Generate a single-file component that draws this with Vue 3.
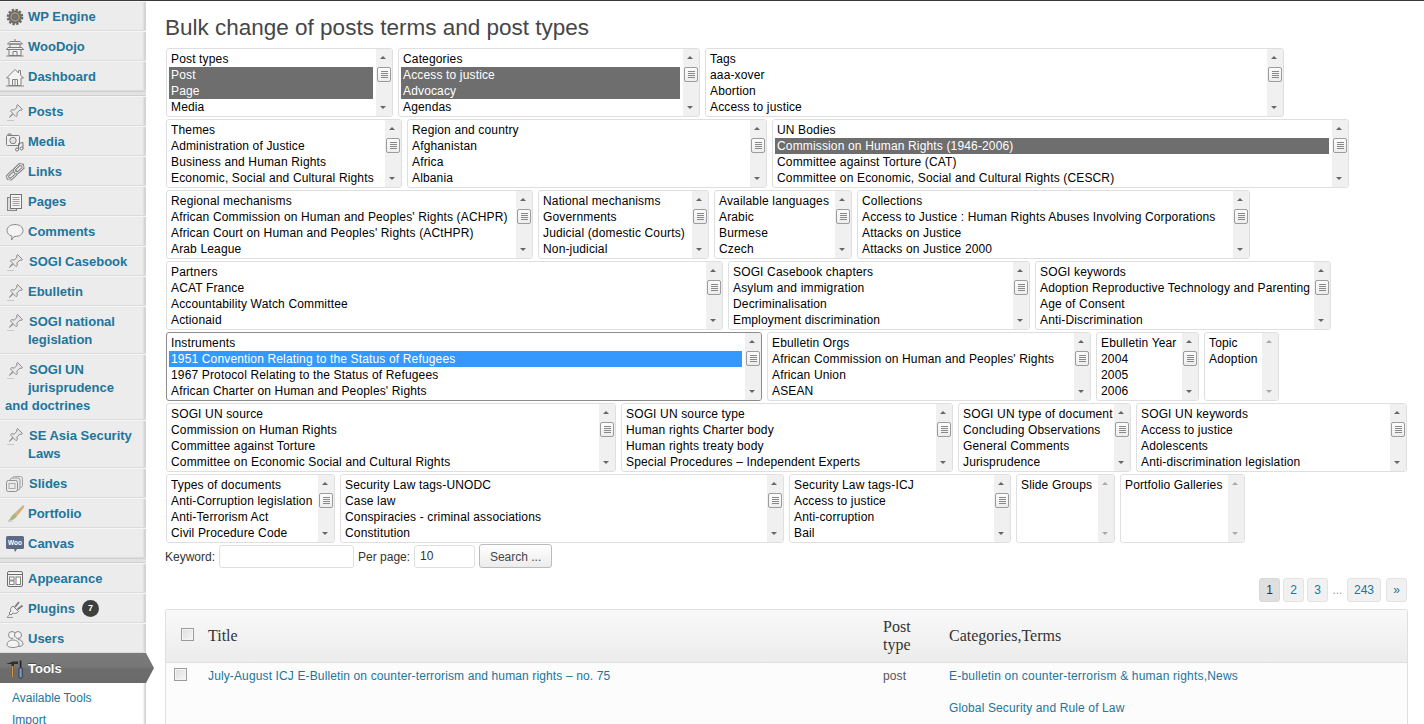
<script setup>
const pin = `<path d="M12.5 2.5l5 5-1.5 1-1-.6-3 3 .3 2.6-1.3 1.2-2.6-2.7-3.9 3.4 3.2-4.2L5.4 8.9l1.3-1.2 2.6.4 2.8-3-.5-1.1z" fill="#e9e9e9" stroke="#8b8b8b" stroke-width="1"/><path d="M2 18.5h7" stroke="#c8c8c8" stroke-width="1"/>`
const icons = {
  gear: `<circle cx="10" cy="10" r="6.6" fill="#6c6c6c"/><circle cx="10" cy="10" r="7.2" fill="none" stroke="#6c6c6c" stroke-width="2.2" stroke-dasharray="2.4 1.4"/><circle cx="10" cy="10" r="4" fill="none" stroke="#a59c6c" stroke-width="1.4"/><circle cx="10" cy="10" r="2.2" fill="#777"/>`,
  dojo: `<path d="M5 4.5h10l2.5 2.5h-15zM10 2v2.5M3 10.5h14l1.5 2h-17zM5 7h10v3.5H5z" fill="#efefef" stroke="#7d7d7d" stroke-width="1"/><path d="M4 12.500v6h12v-6z" fill="#f2f2f2" stroke="#7d7d7d" stroke-width="1"/><path d="M8 18.500v-4h4v4M1.500 19h17" fill="none" stroke="#7d7d7d" stroke-width="1"/>`,
  home: `<path d="M10 2.500L1.500 11h2.500v7.500h12V11h2.500l-3-3V3.500h-2v2.500z" fill="#f4f4f4" stroke="#858585" stroke-width="1" stroke-linejoin="round"/><path d="M7.500 18.500V12.500h5v6M10 12.500v6M1 19h18" fill="none" stroke="#858585" stroke-width="1"/>`,
  pin,
  media: `<rect x="1.500" y="3.500" width="13" height="10" rx="1" fill="#f0f0f0" stroke="#7f7f7f"/><circle cx="8" cy="8.500" r="3.200" fill="#e3e3e3" stroke="#7f7f7f"/><path d="M3 3.500v-1.500h3v1.500" fill="none" stroke="#7f7f7f"/><path d="M13.500 17.500V11.500l4.500-1v6" fill="none" stroke="#777" stroke-width="1"/><circle cx="12" cy="17.500" r="1.500" fill="#eee" stroke="#777"/><circle cx="16.500" cy="16.500" r="1.500" fill="#eee" stroke="#777"/>`,
  link: `<g fill="none" stroke-linecap="round"><path d="M3 16.500l-.5-2.500 5-5 3 .5.500 3-5 4.500z" stroke="#858585" stroke-width="3"/><path d="M3 16.500l-.5-2.500 5-5 3 .5.500 3-5 4.500z" stroke="#eeeeee" stroke-width="1"/><path d="M10 10l-.5-2.500 5-5 3 .5.500 3-5 4.500z" stroke="#858585" stroke-width="3"/><path d="M10 10l-.5-2.500 5-5 3 .5.500 3-5 4.500z" stroke="#eeeeee" stroke-width="1"/></g>`,
  pages: `<rect x="2.500" y="5.500" width="9" height="13" fill="#dcdcdc" stroke="#858585"/><rect x="5.500" y="2.500" width="11" height="14" fill="#f4f4f4" stroke="#747474"/><path d="M7.500 5.500h7M7.500 7.500h7M7.500 9.500h7M7.500 11.500h7M7.500 13.500h7" stroke="#a0a0a0"/>`,
  comment: `<path d="M10 2.500c4.500 0 8 2.500 8 6s-3.500 6-8 6l-1 .2-2.500 3.300.5-3.800c-3-.7-5-3-5-5.700 0-3.500 3.500-6 8-6z" fill="#f4f4f4" stroke="#8a8a8a"/>`,
  slides: `<rect x="7.500" y="2.500" width="10" height="11" rx="2" fill="#e6e6e6" stroke="#a8a8a8"/><rect x="5" y="4" width="10" height="12" rx="2" fill="#e6e6e6" stroke="#a0a0a0"/><rect x="1.500" y="6.500" width="11" height="11" rx="2" fill="#ececec" stroke="#909090"/><rect x="4" y="9.500" width="6" height="5" fill="none" stroke="#aaa"/>`,
  brush: `<path d="M18 1.500L9.500 10l2 2L19 3z" fill="#d8b476" stroke="#c2995a" stroke-width=".6"/><path d="M9.500 9.500l2.500 2.500c-1.500 3-5 4.500-9 5 2.500-1.500 3-5.500 6.500-7.500z" fill="#a9b77c"/><path d="M3 17.500h5" stroke="#cfcfcf"/>`,
  woo: `<path d="M2.500 2h15a1.500 1.500 0 0 1 1.500 1.500v10a1.500 1.500 0 0 1-1.500 1.500H12l-2 3-1-3H2.500A1.500 1.500 0 0 1 1 13.500v-10A1.500 1.500 0 0 1 2.500 2z" fill="#5d6a86"/><text x="10" y="11" font-size="6.500" font-family="Liberation Sans, sans-serif" font-weight="700" fill="#fff" text-anchor="middle">Woo</text>`,
  appearance: `<rect x="2.500" y="2.500" width="15" height="15" rx="1.500" fill="#f3f3f3" stroke="#6f6f6f"/><path d="M2.500 5.500h15" stroke="#6f6f6f"/><rect x="4.500" y="8" width="4.500" height="3" fill="#fff" stroke="#808080"/><rect x="4.500" y="12" width="4.500" height="3.500" fill="#fff" stroke="#808080"/><rect x="11" y="8" width="4.500" height="7.500" fill="#fff" stroke="#808080"/>`,
  plug: `<path d="M8 7l5.500 5.500c-1.500 2-4 2.500-5.500 1.500L6 16l-2-2 2-2c-1-1.500-.5-3.500 2-5z" fill="#eee" stroke="#808080"/><path d="M10 8l4-5M12.500 10.500l5-4" stroke="#808080" stroke-width="2"/><path d="M5 15l-3 3.500h6" fill="none" stroke="#999"/>`,
  users: `<circle cx="7" cy="6" r="3.500" fill="#f2f2f2" stroke="#8a8a8a"/><circle cx="13" cy="6" r="3.500" fill="#f2f2f2" stroke="#8a8a8a"/><path d="M13 10.500c3 0 5 2 5 5 0 1-2 2-5 2" fill="#eee" stroke="#8a8a8a"/><circle cx="9.500" cy="9.500" r="1.500" fill="#f2f2f2"/><path d="M2 16c0-3.500 3-5 6-5s6 1.500 6 5c0 1.500-3 2.500-6 2.500S2 17.500 2 16z" fill="#f4f4f4" stroke="#8a8a8a"/>`,
  tools: `<path d="M1 5l7-2.500h5V5H9v13H6.500V5z" fill="#2f2f2f"/><rect x="6.700" y="7" width="1.800" height="11" fill="#d98f3e"/><rect x="14.800" y="1.500" width="1.600" height="7" fill="#222"/><path d="M14 9h3.200v9a1 1 0 0 1-1 1H15a1 1 0 0 1-1-1z" fill="#6f9bd1" stroke="#222" stroke-width=".7"/>`
}
const menu = [
  [{ l: 'WP Engine', i: 'gear' }, { l: 'WooDojo', i: 'dojo' }, { l: 'Dashboard', i: 'home' }],
  [
    { l: 'Posts', i: 'pin' }, { l: 'Media', i: 'media' }, { l: 'Links', i: 'link' }, { l: 'Pages', i: 'pages' },
    { l: 'Comments', i: 'comment' }, { l: 'SOGI Casebook', i: 'pin' }, { l: 'Ebulletin', i: 'pin' },
    { l: 'SOGI national legislation', i: 'pin' }, { l: 'SOGI UN jurisprudence and doctrines', i: 'pin' },
    { l: 'SE Asia Security Laws', i: 'pin' }, { l: 'Slides', i: 'slides' }, { l: 'Portfolio', i: 'brush' }, { l: 'Canvas', i: 'woo' }
  ],
  [{ l: 'Appearance', i: 'appearance' }, { l: 'Plugins', i: 'plug', badge: 7 }, { l: 'Users', i: 'users' }, { l: 'Tools', i: 'tools', current: true }]
]
const b = (w, items, o = {}) => ({ w, items, ...o })
const rows = [
  [b(227, ['Post types', 'Post', 'Page', 'Media'], { sel: [1, 2] }), b(302, ['Categories', 'Access to justice', 'Advocacy', 'Agendas'], { sel: [1, 2] }), b(579, ['Tags', 'aaa-xover', 'Abortion', 'Access to justice'])],
  [b(236, ['Themes', 'Administration of Justice', 'Business and Human Rights', 'Economic, Social and Cultural Rights']), b(360, ['Region and country', 'Afghanistan', 'Africa', 'Albania']), b(577, ['UN Bodies', 'Commission on Human Rights (1946-2006)', 'Committee against Torture (CAT)', 'Committee on Economic, Social and Cultural Rights (CESCR)'], { sel: [1] })],
  [b(367, ['Regional mechanisms', "African Commission on Human and Peoples' Rights (ACHPR)", "African Court on Human and Peoples' Rights (ACtHPR)", 'Arab League']), b(171, ['National mechanisms', 'Governments', 'Judicial (domestic Courts)', 'Non-judicial']), b(138, ['Available languages', 'Arabic', 'Burmese', 'Czech']), b(393, ['Collections', 'Access to Justice : Human Rights Abuses Involving Corporations', 'Attacks on Justice', 'Attacks on Justice 2000'])],
  [b(557, ['Partners', 'ACAT France', 'Accountability Watch Committee', 'Actionaid']), b(302, ['SOGI Casebook chapters', 'Asylum and immigration', 'Decriminalisation', 'Employment discrimination']), b(296, ['SOGI keywords', 'Adoption Reproductive Technology and Parenting', 'Age of Consent', 'Anti-Discrimination'])],
  [b(596, ['Instruments', '1951 Convention Relating to the Status of Refugees', '1967 Protocol Relating to the Status of Refugees', "African Charter on Human and Peoples' Rights"], { focus: true, sel: [1] }), b(324, ['Ebulletin Orgs', "African Commission on Human and Peoples' Rights", 'African Union', 'ASEAN']), b(103, ['Ebulletin Year', '2004', '2005', '2006']), b(75, ['Topic', 'Adoption'], { off: true })],
  [b(450, ['SOGI UN source', 'Commission on Human Rights', 'Committee against Torture', 'Committee on Economic Social and Cultural Rights']), b(332, ['SOGI UN source type', 'Human rights Charter body', 'Human rights treaty body', 'Special Procedures – Independent Experts']), b(173, ['SOGI UN type of document', 'Concluding Observations', 'General Comments', 'Jurisprudence']), b(271, ['SOGI UN keywords', 'Access to justice', 'Adolescents', 'Anti-discrimination legislation'])],
  [b(169, ['Types of documents', 'Anti-Corruption legislation', 'Anti-Terrorism Act', 'Civil Procedure Code']), b(444, ['Security Law tags-UNODC', 'Case law', 'Conspiracies - criminal associations', 'Constitution']), b(222, ['Security Law tags-ICJ', 'Access to justice', 'Anti-corruption', 'Bail']), b(99, ['Slide Groups'], { off: true }), b(125, ['Portfolio Galleries'], { off: true })]
]
const pages = ['1', '2', '3', '…', '243', '»']
</script>

<template>
  <div class="page">
    <nav class="side">
      <template v-for="(group, g) in menu" :key="g">
        <div v-if="g" class="sep"></div>
        <a v-for="m in group" :key="m.l" class="item" :class="{ current: m.current, indent: m.l[0] === 'S' }">
          <svg class="ico" viewBox="0 0 20 20" width="20" height="20" v-html="icons[m.i]"></svg>
          {{ m.l }}<span v-if="m.badge" class="badge">{{ m.badge }}</span>
        </a>
      </template>
      <div class="sub">
        <a>Available Tools</a>
        <a>Import</a>
      </div>
    </nav>
    <main class="main">
      <h2>Bulk change of posts terms and post types</h2>
      <div class="boxes">
        <div v-for="(row, r) in rows" :key="r" class="row">
          <div v-for="box in row" :key="box.items[0]" class="box" :class="{ focus: box.focus, off: box.off }" :style="{ width: box.w + 'px' }">
            <div class="opts">
              <div v-for="(t, i) in box.items" :key="t" class="opt" :class="{ sel: box.sel && box.sel.includes(i) }">{{ t }}</div>
            </div>
            <div class="bar">
              <span class="up"></span>
              <span v-if="!box.off" class="thumb"><i></i></span>
              <span class="down"></span>
            </div>
          </div>
        </div>
      </div>
      <form class="search" @submit.prevent>
        <label>Keyword:</label>
        <input class="kw" type="text" />
        <label class="pp">Per page:</label>
        <input class="num" type="text" value="10" />
        <button class="btn">Search ...</button>
      </form>
      <div class="pager">
        <template v-for="(p, i) in pages" :key="p">
          <span v-if="p === '…'" class="dots">...</span>
          <a v-else class="pg" :class="{ on: i === 0 }">{{ p }}</a>
        </template>
      </div>
      <table class="tbl">
        <thead>
          <tr>
            <th class="c0"><input class="cb head" type="checkbox" /></th>
            <th class="c1">Title</th>
            <th class="c2">Post<br />type</th>
            <th>Categories,Terms</th>
          </tr>
        </thead>
        <tbody>
          <tr>
            <td class="cc"><input class="cb" type="checkbox" /></td>
            <td><a>July-August ICJ E-Bulletin on counter-terrorism and human rights – no. 75</a></td>
            <td class="pt">post</td>
            <td>
              <p><a>E-bulletin on counter-terrorism &amp; human rights</a>,<a>News</a></p>
              <p><a>Global Security and Rule of Law</a></p>
            </td>
          </tr>
        </tbody>
      </table>
    </main>
  </div>
</template>

<style>
html, body { margin: 0; background: #fff; overflow: hidden; }
</style>

<style scoped>
.page { display: flex; height: 724px; overflow: hidden; font-family: "Liberation Sans", Arial, sans-serif; font-size: 12px; color: #333; border-top: 1px solid #3a3a3a; box-sizing: border-box; }
.side { width: 146px; flex: none; background: #ececec; box-shadow: inset -3px 0 2px -1px #d4d4d4; position: relative; z-index: 1; }
.item { display: block; position: relative; box-sizing: border-box; padding: 6px 10px 4px 5px; min-height: 30px; font-size: 13px; font-weight: 700; line-height: 18px; color: #21759b; border-top: 1px solid #f6f6f6; border-bottom: 1px solid #dcdcdc; box-shadow: inset -3px 0 2px -1px #d4d4d4; }
.indent { text-indent: 1px; }
.ico { float: left; width: 20px; height: 20px; margin: -1px 3px 0 0; }
.sep { height: 5px; background: #e2e2e2; border-top: 1px solid #d0d0d0; border-bottom: 1px solid #d0d0d0; box-sizing: border-box; }
.badge { display: inline-block; width: 17px; height: 17px; margin-left: 7px; border-radius: 50%; background: #3f3f3f; color: #fff; font-size: 9px; line-height: 17px; text-align: center; vertical-align: top; }
.current { background: linear-gradient(#7a7a7a, #777 45%, #6c6c6c 55%, #6a6a6a); color: #fff; border: 0; padding-top: 7px; padding-bottom: 5px; text-shadow: 0 -1px 0 rgba(0,0,0,.4); box-shadow: none; }
.current::after { content: ""; position: absolute; left: 100%; top: 0; width: 8px; height: 30px; background: linear-gradient(#7a7a7a, #777 45%, #6c6c6c 55%, #6a6a6a); clip-path: polygon(0 0, 100% 50%, 0 100%); }
.sub { background: #fff; box-shadow: inset -3px 0 2px -1px #d4d4d4; padding: 5px 12px; height: 60px; }
.sub a { display: block; line-height: 21px; color: #21759b; font-size: 12px; }
.sub a + a { margin-top: 1px; }
.main { flex: 1; min-width: 0; padding-left: 19px; padding-right: 16px; }
h2 { margin: 0; padding-top: 13px; height: 34px; font-weight: 400; font-size: 22.5px; line-height: 28px; color: #464646; }
.boxes { display: flex; flex-direction: column; gap: 2px; padding-left: 1px; }
.row { display: flex; gap: 5px; }
.box { display: flex; height: 69px; box-sizing: border-box; border: 1px solid #dfdfdf; border-radius: 3px; background: #fff; overflow: hidden; color: #000; }
.box.focus { border-color: #8c8c8c; }
.opts { flex: 1; min-width: 0; padding: 2px 3px 0 2px; overflow: hidden; letter-spacing: .15px; }
.opt { height: 16px; line-height: 16px; padding-left: 2px; white-space: nowrap; }
.opt.sel { background: #6e6e6e; color: #fff; }
.focus .opt.sel { background: #3399ff; }
.bar { flex: none; width: 16px; position: relative; background: #f0f0f0; }
.up, .down { position: absolute; left: 4px; width: 0; height: 0; border-left: 3.5px solid transparent; border-right: 3.5px solid transparent; }
.up { top: 7px; border-bottom: 3px solid #666; }
.down { bottom: 7px; border-top: 3px solid #666; }
.off .up { border-bottom-color: #aaa; }
.off .down { border-top-color: #aaa; }
.thumb { position: absolute; left: 1px; top: 18px; width: 14px; height: 15px; box-sizing: border-box; background: linear-gradient(#fcfcfc, #ededed); border: 1px solid #9c9c9c; border-radius: 2px; display: flex; align-items: center; justify-content: center; }
.thumb i { display: block; width: 7px; height: 7px; background: repeating-linear-gradient(#888 0 1px, transparent 1px 2px); }
.search { display: flex; align-items: center; height: 25px; }
.search label { color: #333; padding-top: 3px; }
.kw, .num, .btn { font: inherit; box-sizing: border-box; }
.kw, .num { height: 23px; margin: 1px 0 0; border: 1px solid #dfdfdf; border-radius: 3px; background: #fff; color: #333; outline: 0; padding: 0 4px; }
.kw { width: 135px; margin-left: 4px; }
.pp { margin-left: 4px; }
.num { width: 61px; margin-left: 4px; padding-left: 5px; }
.btn { width: 73px; height: 24px; margin-left: 4px; border: 1px solid #bbb; border-radius: 3px; background: linear-gradient(#fff, #ececec); color: #464646; padding: 2px 0 0; }
.pager { display: flex; justify-content: flex-end; align-items: center; gap: 3px; height: 24px; margin-top: 10px; padding-right: 1px; }
.pg { box-sizing: border-box; min-width: 21px; height: 24px; line-height: 22px; padding: 0 6px; text-align: center; border: 1px solid #e3e3e3; border-radius: 3px; background: #f1f1f1; color: #21759b; font-size: 12px; }
.pg:last-child { margin-left: 2px; }
.pg.on { background: #dfdfdf; color: #333; border-color: #d8d8d8; }
.dots { width: 13px; text-align: center; color: #999; }
.tbl { width: 1243px; margin-top: 7px; border: 1px solid #dfdfdf; border-bottom: 0; border-radius: 3px 3px 0 0; border-spacing: 0; table-layout: fixed; background: #fcfcfc; }
th { height: 53px; box-sizing: border-box; padding: 0 7px; text-align: left; font-family: "Liberation Serif", Georgia, serif; font-size: 16px; line-height: 18px; font-weight: 400; color: #333; background: linear-gradient(#f9f9f9, #ececec); border-bottom: 1px solid #dfdfdf; }
.c0 { width: 35px; padding: 0 0 0 15px; box-sizing: border-box; }
.c1 { width: 675px; }
.c2 { width: 66px; }
td { vertical-align: top; padding: 6px 7px; line-height: 14px; height: 200px; color: #21759b; letter-spacing: .13px; }
.cc { padding: 5px 0 0 8px; }
.pt { color: #555; }
td p { margin: 0 0 18px; }
td p:first-child { letter-spacing: .2px; }
.cb { appearance: none; display: block; margin: 0; width: 13px; height: 13px; box-sizing: border-box; border: 1px solid #9c9c9c; background: linear-gradient(135deg, #dcdcdc, #f8f8f8); box-shadow: inset 0 0 0 1px #f4f4f4; }
.cb.head { margin-bottom: 4px; }
</style>
